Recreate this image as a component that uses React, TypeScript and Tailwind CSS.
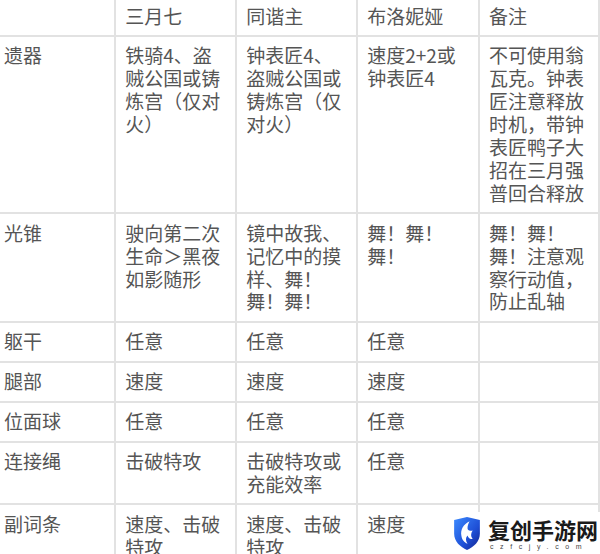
import React from 'react';

type Row = { label: string; cells: string[][] };

const headers = ['', '三月七', '同谐主', '布洛妮娅', '备注'];

const rows: Row[] = [
  {
    label: '遗器',
    cells: [
      ['铁骑4、盗', '贼公国或铸', '炼宫（仅对', '火）'],
      ['钟表匠4、', '盗贼公国或', '铸炼宫（仅', '对火）'],
      ['速度2+2或', '钟表匠4'],
      ['不可使用翁', '瓦克。钟表', '匠注意释放', '时机，带钟', '表匠鸭子大', '招在三月强', '普回合释放'],
    ],
  },
  {
    label: '光锥',
    cells: [
      ['驶向第二次', '生命＞黑夜', '如影随形'],
      ['镜中故我、', '记忆中的摸', '样、舞！', '舞！舞！'],
      ['舞！舞！', '舞！'],
      ['舞！舞！', '舞！注意观', '察行动值，', '防止乱轴'],
    ],
  },
  { label: '躯干', cells: [['任意'], ['任意'], ['任意'], []] },
  { label: '腿部', cells: [['速度'], ['速度'], ['速度'], []] },
  { label: '位面球', cells: [['任意'], ['任意'], ['任意'], []] },
  { label: '连接绳', cells: [['击破特攻'], ['击破特攻或', '充能效率'], ['任意'], []] },
  { label: '副词条', cells: [['速度、击破', '特攻'], ['速度、击破', '特攻'], ['速度'], []] },
];

const colWidths = ['w-[122px]', 'w-[121px]', 'w-[121px]', 'w-[122px]', 'w-[120px]'];

function Lines({ lines }: { lines: string[] }) {
  return (
    <>
      {lines.map((l, i) => (
        <div key={i} className="whitespace-nowrap">
          {l}
        </div>
      ))}
    </>
  );
}

function Logo() {
  return (
    <div className="absolute right-0 bottom-0 w-[155px] h-[42px] bg-white flex items-center pl-[7px] gap-[6px]">
      <svg width="30" height="35" viewBox="0 0 29 34">
        <defs>
          <linearGradient id="sh" x1="0" y1="0" x2="1" y2="1">
            <stop offset="0" stopColor="#3d8bff" />
            <stop offset="0.6" stopColor="#1e4fd6" />
            <stop offset="1" stopColor="#14228c" />
          </linearGradient>
        </defs>
        <path d="M2 4 L14.5 1 L27 4 L27 17 C27 25 21 30 14.5 33 C8 30 2 25 2 17 Z" fill="url(#sh)" />
        <path
          d="M17 5 C11 8 8 13 9 19 C9.5 23 12 26 15 27 C13 24 13 21 15 19 C16 22 18 23 20 22 C18 20 18 17 20 14 C17 15 15 14 15 12 C15 9 16 7 17 5 Z"
          fill="#ffffff"
        />
      </svg>
      <div className="flex flex-col leading-none">
        <span className="text-[22px] font-bold text-[#1a1a1a] leading-[27px] [font-family:'Noto_Sans_CJK_SC',sans-serif]">
          复创手游网
        </span>
        <span className="text-[7px] text-[#444] tracking-[6.6px] pl-[2px] [font-family:'Liberation_Sans',sans-serif]">
          czfcjy.com
        </span>
      </div>
    </div>
  );
}

export default function App() {
  return (
    <div className="relative w-[600px] h-[554px] overflow-hidden bg-white">
      <table className="table-fixed border-collapse ml-[-7px] mt-[-5px] text-[19px] leading-[22.9px] text-[#555555] [font-family:'Noto_Sans_CJK_SC',sans-serif]">
        <colgroup>
          {colWidths.map((w, i) => (
            <col key={i} className={w} />
          ))}
        </colgroup>
        <thead>
          <tr>
            {headers.map((h, i) => (
              <th
                key={i}
                className="border-2 border-[#e2e2e2] pl-[9px] pr-[8px] py-[7.5px] text-left font-normal align-top"
              >
                {h}
              </th>
            ))}
          </tr>
        </thead>
        <tbody>
          {rows.map((r) => (
            <tr key={r.label}>
              <td className="border-2 border-[#e2e2e2] pl-[9px] pr-[8px] py-[7.5px] align-top">{r.label}</td>
              {r.cells.map((c, i) => (
                <td key={i} className="border-2 border-[#e2e2e2] pl-[9px] pr-[8px] py-[7.5px] align-top">
                  <Lines lines={c} />
                </td>
              ))}
            </tr>
          ))}
        </tbody>
      </table>
      <Logo />
    </div>
  );
}
